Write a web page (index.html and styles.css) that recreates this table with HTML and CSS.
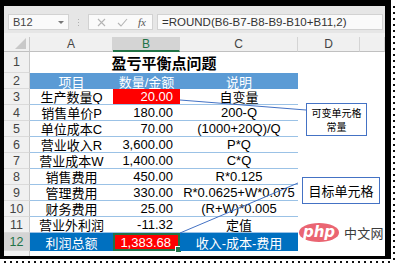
FILE: index.html
```html
<!DOCTYPE html>
<html lang="zh">
<head>
<meta charset="utf-8">
<title>盈亏平衡点问题</title>
<link rel="stylesheet" href="styles.css">
</head>
<body>
<div class="page">
  <div class="frame">
    <div class="app">
      <div class="fbar">
        <div class="namebox"><span class="ref">B12</span><span class="caret"></span></div>
        <div class="grip"><i></i><i></i><i></i></div>
        <div class="fxbox">
          <svg class="ico" width="9" height="9" viewBox="0 0 9 9"><path d="M1 1L8 8M8 1L1 8" stroke="#b4b4b4" stroke-width="1.1" fill="none"/></svg>
          <svg class="ico" width="11" height="9" viewBox="0 0 11 9"><path d="M1 5L4 8L10 1" stroke="#b4b4b4" stroke-width="1.1" fill="none"/></svg>
          <span class="fx">fx</span>
        </div>
        <div class="formula">=ROUND(B6-B7-B8-B9-B10+B11,2)</div>
      </div>
      <div class="sheet">
        <div class="corner"><span class="tri"></span></div>
        <div class="ch">A</div>
        <div class="ch act">B</div>
        <div class="ch">C</div>
        <div class="ch">D</div>
        <div class="ch"></div>

        <div class="rh">1</div>
        <div class="c title">盈亏平衡点问题</div>
        <div class="c"></div><div class="c"></div>

        <div class="rh">2</div>
        <div class="c hd">项目</div><div class="c hd">数量/金额</div><div class="c hd">说明</div>
        <div class="c"></div><div class="c"></div>

        <div class="rh">3</div>
        <div class="c bl">生产数量Q</div><div class="c n red">20.00</div><div class="c bl">自变量</div>
        <div class="c"></div><div class="c"></div>

        <div class="rh">4</div>
        <div class="c bl">销售单价P</div><div class="c n bl">180.00</div><div class="c bl">200-Q</div>
        <div class="c"></div><div class="c"></div>

        <div class="rh">5</div>
        <div class="c bl">单位成本C</div><div class="c n bl">70.00</div><div class="c bl">(1000+20Q)/Q</div>
        <div class="c"></div><div class="c"></div>

        <div class="rh">6</div>
        <div class="c bl">营业收入R</div><div class="c n bl">3,600.00</div><div class="c bl">P*Q</div>
        <div class="c"></div><div class="c"></div>

        <div class="rh">7</div>
        <div class="c bl">营业成本W</div><div class="c n bl">1,400.00</div><div class="c bl">C*Q</div>
        <div class="c"></div><div class="c"></div>

        <div class="rh">8</div>
        <div class="c bl">销售费用</div><div class="c n bl">450.00</div><div class="c bl">R*0.125</div>
        <div class="c"></div><div class="c"></div>

        <div class="rh">9</div>
        <div class="c bl">管理费用</div><div class="c n bl">330.00</div><div class="c bl">R*0.0625+W*0.075</div>
        <div class="c"></div><div class="c"></div>

        <div class="rh">10</div>
        <div class="c bl">财务费用</div><div class="c n bl">25.00</div><div class="c bl">(R+W)*0.005</div>
        <div class="c"></div><div class="c"></div>

        <div class="rh">11</div>
        <div class="c bl">营业外利润</div><div class="c n bl">-11.32</div><div class="c bl">定值</div>
        <div class="c"></div><div class="c"></div>

        <div class="rh act">12</div>
        <div class="c tot">利润总额</div><div class="c n sel">1,383.68<span class="handle"></span></div><div class="c tot">收入-成本-费用</div>
        <div class="c"></div><div class="c"></div>

        <div class="rh last"></div>
        <div class="c"></div><div class="c"></div><div class="c"></div><div class="c"></div><div class="c"></div>
      </div>

      <svg class="links" width="381" height="250" viewBox="0 0 381 250">
        <line x1="176" y1="94" x2="302" y2="104" stroke="#4472c4" stroke-width="1"/>
        <line x1="176" y1="227" x2="294" y2="177" stroke="#4472c4" stroke-width="1"/>
      </svg>
      <div class="callout small">可变单元格<br>常量</div>
      <div class="callout big">目标单元格</div>
      <div class="logo"><span class="php">php</span><span class="cn">中文网</span></div>
    </div>
  </div>
  <div class="vdash"></div>
  <div class="hdash"></div>
</div>
</body>
</html>
```

FILE: styles.css
```css
html, body {
  margin: 0;
  padding: 0;
  background: #fff;
}

.page {
  display: grid;
  grid-template-columns: 391px 2px;
  grid-template-rows: 259px 2px;
  gap: 2px;
}

.frame {
  box-sizing: border-box;
  width: 391px;
  height: 259px;
  border-style: solid;
  border-color: #000;
  border-width: 6px 6px 3px 4px;
}

.vdash {
  grid-column: 2;
  grid-row: 1 / 3;
  margin-top: 6px;
  width: 2px;
  background: repeating-linear-gradient(to bottom, #111 0 2px, transparent 2px 6px);
}

.hdash {
  grid-column: 1;
  grid-row: 2;
  margin-left: 4px;
  height: 2px;
  background: repeating-linear-gradient(to right, #111 0 2px, transparent 2px 6px);
}

.app {
  position: relative;
  width: 381px;
  height: 250px;
  background: #fff;
  display: flex;
  flex-direction: column;
  overflow: hidden;
}

/* formula bar */
.fbar {
  box-sizing: border-box;
  height: 31px;
  flex: none;
  background: #e6e6e6;
  border-bottom: 4px solid #f1f1f1;
  display: flex;
  align-items: flex-start;
  padding: 8px 2px 0 4px;
  font-family: "Liberation Sans", Arial, sans-serif;
  font-size: 11px;
  color: #444;
}

.namebox {
  box-sizing: border-box;
  width: 61px;
  height: 16px;
  background: #fafafa;
  border: 1px solid #d2d2d2;
  display: flex;
  align-items: center;
  justify-content: space-between;
  padding: 0 4px 0 4px;
}

.caret {
  width: 0;
  height: 0;
  border-left: 3px solid transparent;
  border-right: 3px solid transparent;
  border-top: 3px solid #777;
}

.grip {
  width: 2px;
  height: 16px;
  margin: 0 8px 0 9px;
  display: flex;
  flex-direction: column;
  justify-content: center;
  gap: 2px;
}

.grip i {
  display: block;
  width: 1px;
  height: 1px;
  background: #b0b0b0;
}

.fxbox {
  box-sizing: border-box;
  width: 65px;
  height: 16px;
  background: #fafafa;
  border: 1px solid #d2d2d2;
  display: flex;
  align-items: center;
  padding: 0 6px 0 8px;
  justify-content: space-between;
}

.fx {
  font-family: "Liberation Serif", serif;
  font-style: italic;
  font-size: 11px;
  color: #555;
}

.formula {
  box-sizing: border-box;
  flex: 1;
  height: 16px;
  margin-left: 4px;
  background: #fafafa;
  border: 1px solid #d2d2d2;
  padding: 0 0 0 4px;
  line-height: 14px;
  font-size: 11.5px;
  color: #333;
  white-space: nowrap;
  overflow: hidden;
}

/* sheet */
.sheet {
  flex: 1;
  display: grid;
  grid-template-columns: 26px 83px 67px 118px 62px 25px;
  grid-template-rows: 15px 21px repeat(10, 16px) 18px 1fr;
  font-family: "Liberation Sans", "Noto Sans CJK SC", sans-serif;
  font-size: 13px;
  color: #000;
}

.corner {
  box-sizing: border-box;
  background: #f0f0f0;
  border-right: 1px solid #c8c8c8;
  border-bottom: 1px solid #c0c0c0;
  display: flex;
  align-items: flex-end;
  justify-content: flex-end;
  padding: 0 3px 2px 0;
}

.tri {
  width: 0;
  height: 0;
  border-left: 11px solid transparent;
  border-bottom: 11px solid #c8c8c8;
}

.ch {
  box-sizing: border-box;
  background: #f0f0f0;
  color: #444;
  border-right: 1px solid #d4d4d4;
  border-bottom: 1px solid #c0c0c0;
  display: flex;
  align-items: center;
  justify-content: center;
  font-size: 12px;
}

.ch.act {
  background: #d4d4d4;
  color: #217346;
  border-bottom: 2px solid #217346;
}

.rh {
  box-sizing: border-box;
  background: #f0f0f0;
  color: #444;
  border-right: 1px solid #c8c8c8;
  border-bottom: 1px solid #dadada;
  display: flex;
  align-items: center;
  justify-content: center;
  font-size: 12.5px;
}

.rh.act {
  background: #d4d4d4;
  color: #217346;
}

.rh.last {
  border-bottom: none;
}

.c {
  box-sizing: border-box;
  display: flex;
  align-items: center;
  justify-content: center;
  white-space: nowrap;
  overflow: hidden;
  position: relative;
}

.c.n {
  justify-content: flex-end;
  padding-right: 7px;
}

.c.bl {
  border-bottom: 1px solid #9bc2e6;
}

.title {
  grid-column: 2 / span 3;
  font-weight: bold;
  font-size: 15px;
}

.hd {
  background: #5b9bd5;
  color: #fff;
}

.red {
  background: #ff0000;
  color: #fff;
  border-bottom: 1px solid #9bc2e6;
}

.tot {
  background: #0070c0;
  color: #fff;
}

.sel {
  background: #ff0000;
  color: #fff;
  border: 2px solid #217346;
  overflow: visible;
}

.handle {
  position: absolute;
  right: -4px;
  bottom: -4px;
  width: 5px;
  height: 5px;
  background: #217346;
  border: 1px solid #fff;
}

/* overlays */
.links {
  position: absolute;
  left: 0;
  top: 0;
  pointer-events: none;
}

.callout {
  position: absolute;
  box-sizing: border-box;
  background: #fff;
  border: 1px solid #4472c4;
  font-family: "Noto Sans CJK SC", sans-serif;
  color: #000;
  text-align: center;
  display: flex;
  align-items: center;
  justify-content: center;
}

.callout.small {
  left: 302px;
  top: 97px;
  width: 61px;
  height: 33px;
  font-size: 10px;
  line-height: 14px;
}

.callout.big {
  left: 298px;
  top: 171px;
  width: 78px;
  height: 27px;
  font-size: 13px;
}

.logo {
  position: absolute;
  left: 295px;
  top: 217px;
  display: flex;
  align-items: center;
  gap: 5px;
  white-space: nowrap;
}

.php {
  flex: none;
  width: 40px;
  height: 19px;
  border-radius: 50%;
  background: #ea6572;
  color: #fff;
  font-family: "DejaVu Sans", sans-serif;
  font-style: italic;
  font-weight: bold;
  font-size: 15px;
  line-height: 18px;
  text-align: center;
}

.cn {
  flex: none;
  font-family: "Noto Sans CJK SC", sans-serif;
  font-size: 13px;
  line-height: 16px;
  letter-spacing: 0.3px;
  color: #3c3c3c;
  white-space: nowrap;
}
```
